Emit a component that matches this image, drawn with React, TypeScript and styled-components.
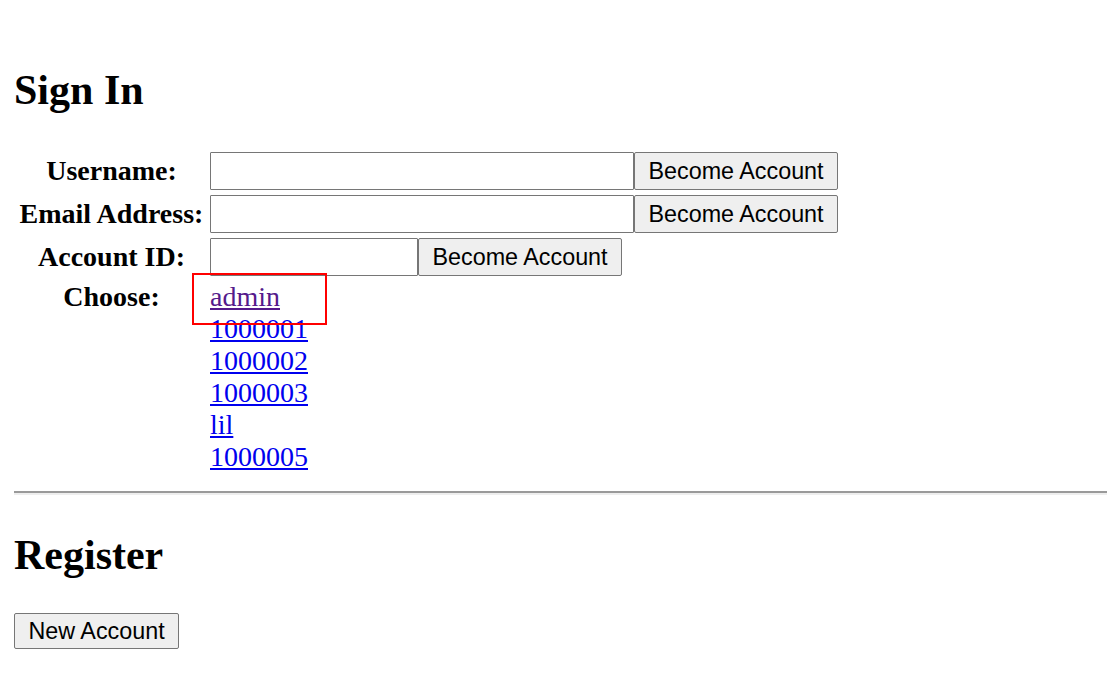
import React from "react";
import styled, { createGlobalStyle } from "styled-components";

const GlobalStyle = createGlobalStyle`
  html, body {
    margin: 0;
    padding: 0;
    background: #ffffff;
    color: #000000;
    font-family: "Liberation Serif", "Times New Roman", serif;
  }
`;

const Page = styled.div`
  padding: 0 0 40px 14px;
  overflow: hidden;
`;

const Heading = styled.h1<{ $top: number; $bottom: number }>`
  margin: ${(p) => p.$top}px 0 ${(p) => p.$bottom}px 0;
  font-size: 42px;
  line-height: 48px;
  font-weight: bold;
`;

const FormGrid = styled.div`
  display: grid;
  grid-template-columns: 195px auto;
  column-gap: 1px;
  row-gap: 5px;
  justify-content: start;
`;

const Label = styled.div<{ $top?: boolean }>`
  font-size: 28px;
  font-weight: bold;
  text-align: center;
  line-height: ${(p) => (p.$top ? "32px" : "38px")};
  align-self: ${(p) => (p.$top ? "start" : "center")};
  white-space: nowrap;
`;

const Field = styled.div`
  display: flex;
  align-items: stretch;
  height: 38px;
`;

const TextInput = styled.input<{ $w: number }>`
  box-sizing: border-box;
  width: ${(p) => p.$w}px;
  height: 38px;
  border: 1px solid #767676;
  border-radius: 1px;
  background: #ffffff;
  padding: 2px 4px;
  font-family: "Liberation Sans", Arial, sans-serif;
  font-size: 23px;
  margin: 0;
`;

const Button = styled.button<{ $h?: number }>`
  box-sizing: border-box;
  height: ${(p) => p.$h ?? 38}px;
  padding: 0 13.5px;
  margin: 0;
  border: 1px solid #767676;
  border-radius: 2px;
  background: #efefef;
  color: #000000;
  font-family: "Liberation Sans", Arial, sans-serif;
  font-size: 23.33px;
  line-height: 26px;
  white-space: nowrap;
  display: inline-flex;
  align-items: center;
`;

const Links = styled.div`
  position: relative;
  justify-self: start;
`;

const AccountLink = styled.a<{ $visited?: boolean }>`
  display: block;
  width: max-content;
  font-size: 28px;
  line-height: 32px;
  color: ${(p) => (p.$visited ? "#551a8b" : "#0000ee")};
  text-decoration: underline;
`;

const Highlight = styled.div`
  position: absolute;
  left: -18px;
  top: -8px;
  width: 135px;
  height: 52px;
  box-sizing: border-box;
  border: 2px solid #ff0000;
  pointer-events: none;
`;

const Rule = styled.hr`
  margin: 18px -20px 0 0;
  height: 0;
  border: none;
  border-top: 2px solid #9a9a9a;
  border-bottom: 2px solid #eeeeee;
`;

const rows = [
  { label: "Username:", width: 424 },
  { label: "Email Address:", width: 424 },
  { label: "Account ID:", width: 208 },
];

const accounts = ["admin", "1000001", "1000002", "1000003", "lil", "1000005"];

export default function App() {
  return (
    <>
      <GlobalStyle />
      <Page>
        <Heading $top={66} $bottom={38}>
          Sign In
        </Heading>
        <FormGrid>
          {rows.map((r) => (
            <React.Fragment key={r.label}>
              <Label>{r.label}</Label>
              <Field>
                <TextInput type="text" $w={r.width} />
                <Button type="button">Become Account</Button>
              </Field>
            </React.Fragment>
          ))}
          <Label $top>Choose:</Label>
          <Links>
            {accounts.map((a, i) => (
              <AccountLink key={a} href="#" $visited={i === 0}>
                {a}
              </AccountLink>
            ))}
            <Highlight />
          </Links>
        </FormGrid>
        <Rule />
        <Heading $top={36} $bottom={34}>
          Register
        </Heading>
        <Button type="button" $h={36}>
          New Account
        </Button>
      </Page>
    </>
  );
}
